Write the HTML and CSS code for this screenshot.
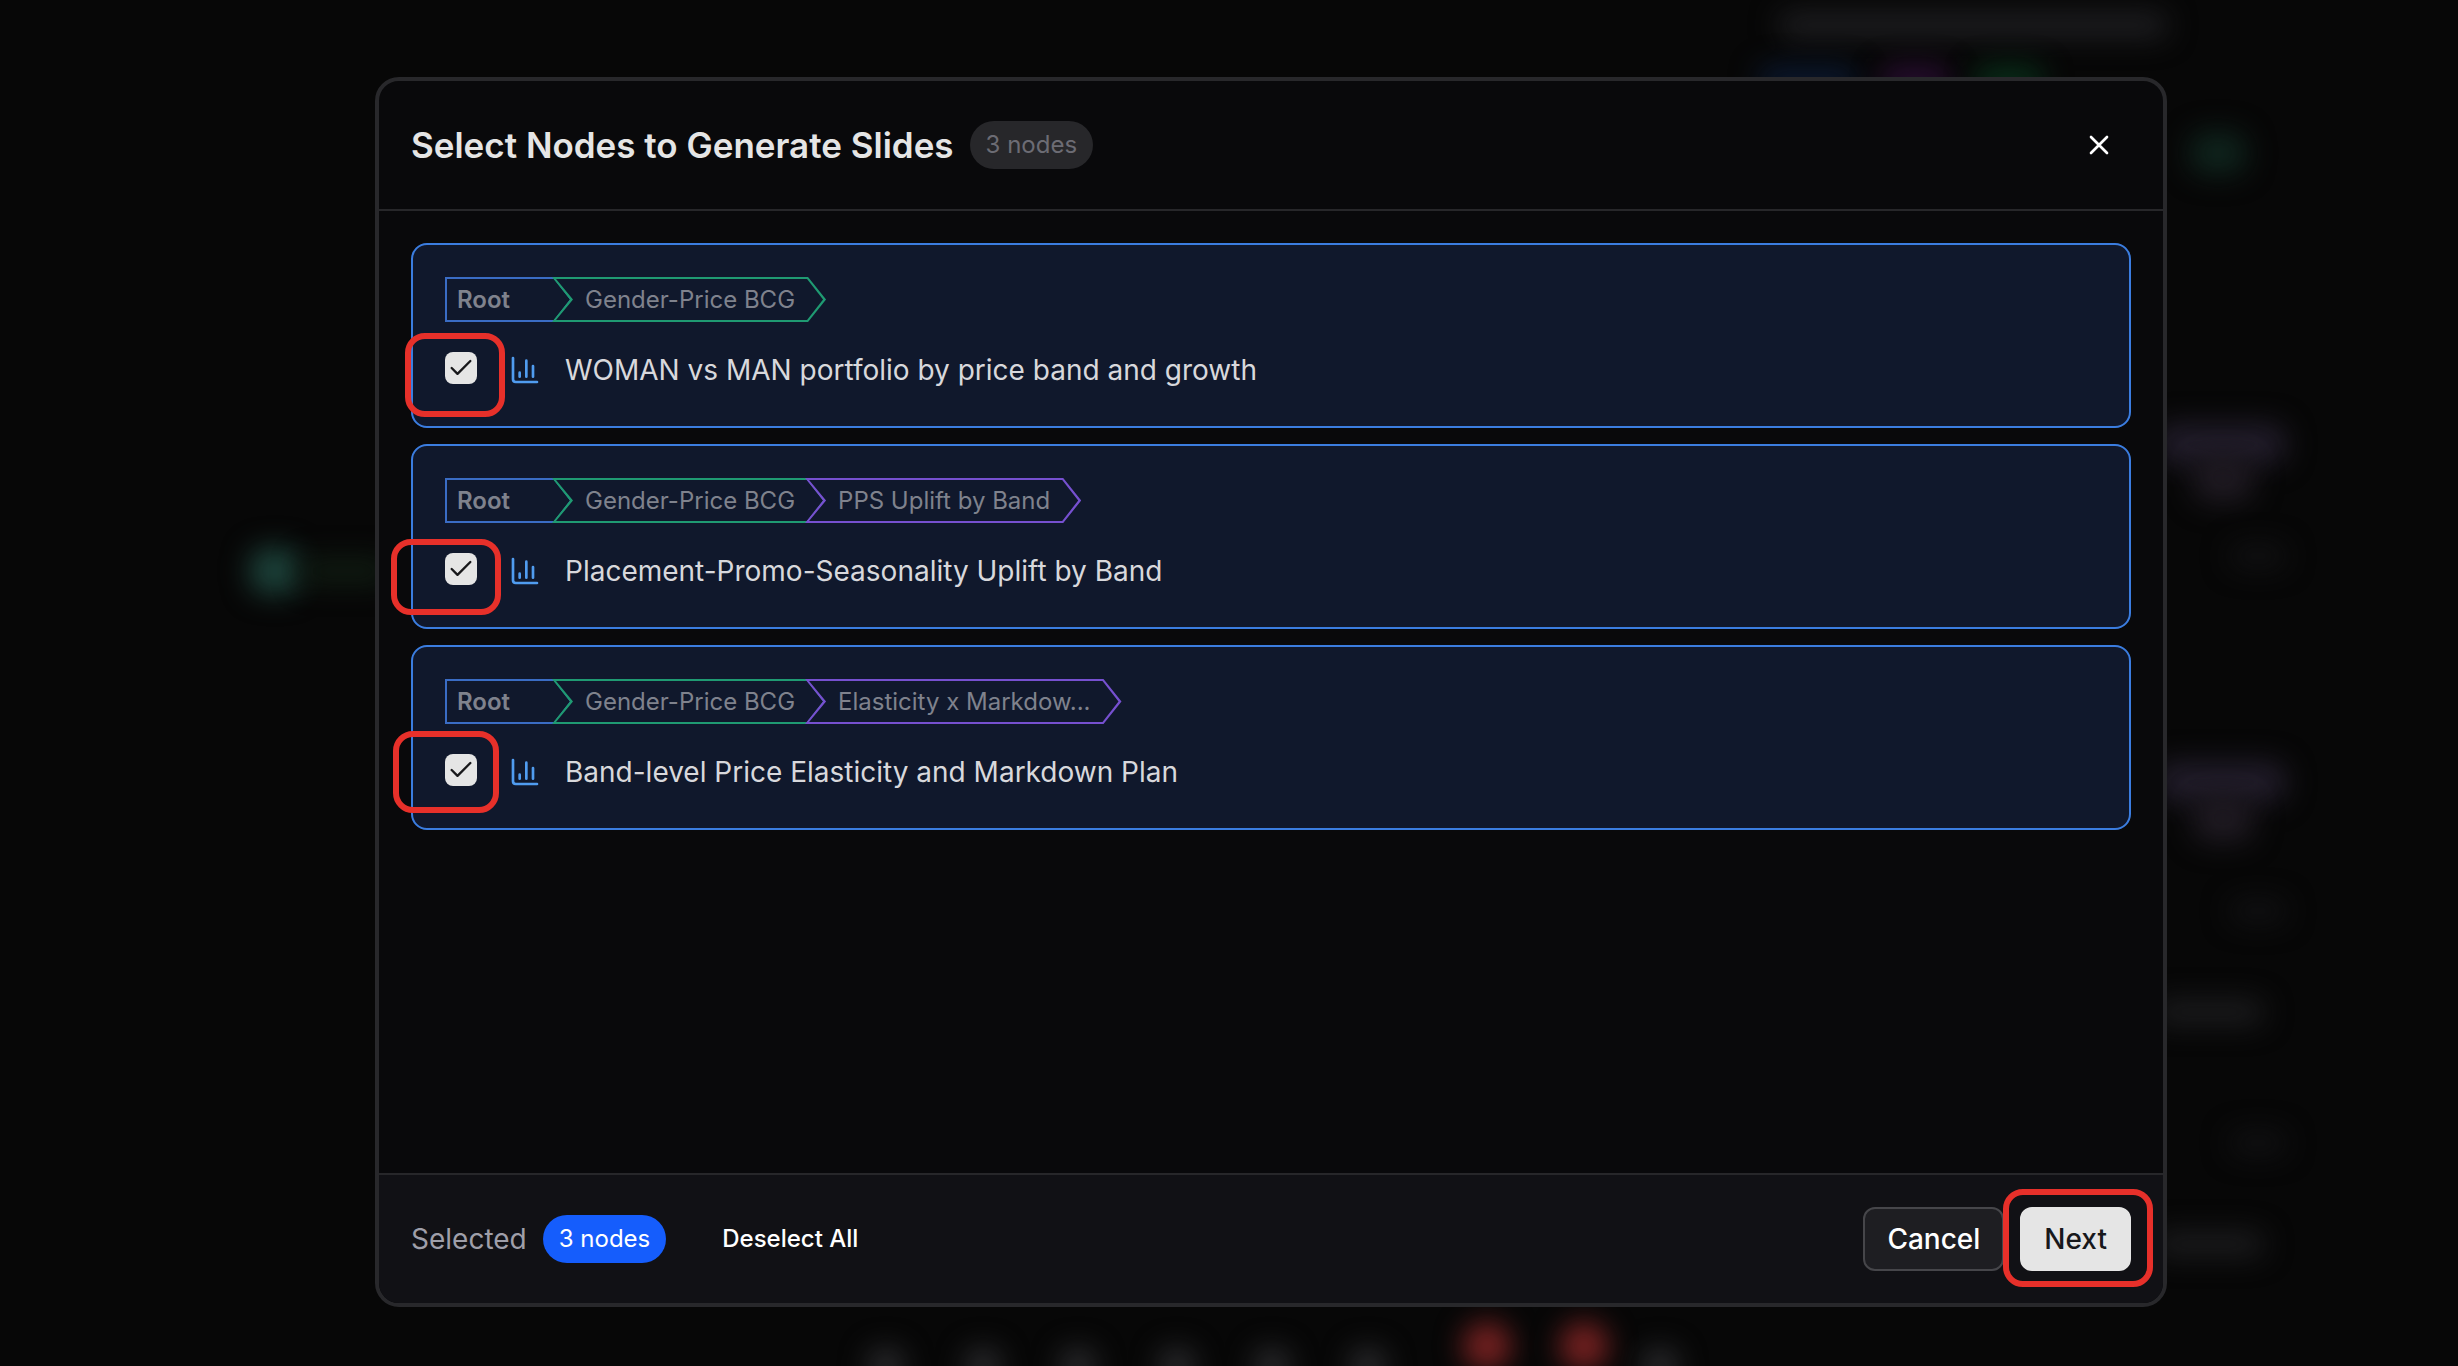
FILE: index.html
```html
<!DOCTYPE html>
<html lang="en">
<head>
    <meta charset="UTF-8">
    <meta name="viewport" content="width=device-width, initial-scale=1.0">
    <title>Select Nodes to Generate Slides</title>
    <link rel="stylesheet" href="styles.css">
</head>
<body>
    <!-- blurred canvas behind the dialog -->
    <div class="backdrop" aria-hidden="true">
        <span class="blob blob-heading"></span>
        <span class="blob blob-tag tag-blue"></span>
        <span class="blob blob-tag tag-purple"></span>
        <span class="blob blob-tag tag-green"></span>
        <span class="blob blob-status"></span>
        <span class="blob blob-node node-a"></span>
        <span class="blob blob-node-tip tip-a"></span>
        <span class="blob blob-node node-b"></span>
        <span class="blob blob-node-tip tip-b"></span>
        <span class="blob blob-line line-a"></span>
        <span class="blob blob-line line-b"></span>
        <span class="blob blob-dot dot-a"></span>
        <span class="blob blob-dot dot-b"></span>
        <span class="blob blob-dot dot-c"></span>
        <span class="blob blob-root"></span>
        <span class="blob blob-root-text"></span>
        <span class="blob blob-tool tool-1"></span>
        <span class="blob blob-tool tool-2"></span>
        <span class="blob blob-tool tool-3"></span>
        <span class="blob blob-tool tool-4"></span>
        <span class="blob blob-tool tool-5"></span>
        <span class="blob blob-tool tool-6"></span>
        <span class="blob blob-tool tool-7"></span>
        <span class="blob blob-alert alert-1"></span>
        <span class="blob blob-alert alert-2"></span>
    </div>

    <div class="overlay">
        <div class="dialog" role="dialog" aria-modal="true" aria-labelledby="dialog-title">
            <header class="dialog-header">
                <h2 class="dialog-title" id="dialog-title">Select Nodes to Generate Slides</h2>
                <span class="badge">3 nodes</span>
                <button class="btn-close" type="button" aria-label="Close">
                    <svg class="icon" viewBox="0 0 24 24"><path d="M18 6 6 18M6 6l12 12"/></svg>
                </button>
            </header>

            <ul class="node-list">
                <li class="node-card">
                    <div class="path">
                        <span class="crumb crumb-root">Root</span>
                        <span class="crumb crumb-green">Gender-Price BCG</span>
                    </div>
                    <div class="node-row">
                        <span class="check">
                            <input type="checkbox" id="node-1" checked>
                            <svg viewBox="0 0 24 24"><path d="M20 6 9 17l-5-5"/></svg>
                        </span>
                        <svg class="icon icon-chart" viewBox="0 0 24 24"><path d="M3 3v16a2 2 0 0 0 2 2h16M18 17V9M13 17V5M8 17v-3"/></svg>
                        <label class="node-title" for="node-1">WOMAN vs MAN portfolio by price band and growth</label>
                    </div>
                    <span class="mark mark-1"></span>
                </li>
                <li class="node-card">
                    <div class="path">
                        <span class="crumb crumb-root">Root</span>
                        <span class="crumb crumb-green">Gender-Price BCG</span>
                        <span class="crumb crumb-purple">PPS Uplift by Band</span>
                    </div>
                    <div class="node-row">
                        <span class="check">
                            <input type="checkbox" id="node-2" checked>
                            <svg viewBox="0 0 24 24"><path d="M20 6 9 17l-5-5"/></svg>
                        </span>
                        <svg class="icon icon-chart" viewBox="0 0 24 24"><path d="M3 3v16a2 2 0 0 0 2 2h16M18 17V9M13 17V5M8 17v-3"/></svg>
                        <label class="node-title" for="node-2">Placement-Promo-Seasonality Uplift by Band</label>
                    </div>
                    <span class="mark mark-2"></span>
                </li>
                <li class="node-card">
                    <div class="path">
                        <span class="crumb crumb-root">Root</span>
                        <span class="crumb crumb-green">Gender-Price BCG</span>
                        <span class="crumb crumb-purple">Elasticity x Markdow...</span>
                    </div>
                    <div class="node-row">
                        <span class="check">
                            <input type="checkbox" id="node-3" checked>
                            <svg viewBox="0 0 24 24"><path d="M20 6 9 17l-5-5"/></svg>
                        </span>
                        <svg class="icon icon-chart" viewBox="0 0 24 24"><path d="M3 3v16a2 2 0 0 0 2 2h16M18 17V9M13 17V5M8 17v-3"/></svg>
                        <label class="node-title" for="node-3">Band-level Price Elasticity and Markdown Plan</label>
                    </div>
                    <span class="mark mark-3"></span>
                </li>
            </ul>

            <footer class="dialog-footer">
                <span class="selected-label">Selected</span>
                <span class="badge badge-blue">3 nodes</span>
                <button class="btn-text" type="button">Deselect All</button>
                <div class="actions">
                    <button class="btn btn-cancel" type="button">Cancel</button>
                    <div class="next-wrap">
                        <button class="btn btn-next" type="button">Next</button>
                        <span class="mark mark-next"></span>
                    </div>
                </div>
            </footer>
        </div>
    </div>
</body>
</html>
```
FILE: styles.css
```css
* {
    box-sizing: border-box;
}
body {
    margin: 0;
    background: #070707;
    color: #e5e5e5;
    font-family: Inter, "Liberation Sans", sans-serif;
    font-size: 28px;
    line-height: 40px;
    overflow: hidden;
}
button {
    font: inherit;
    cursor: pointer;
}

/* backdrop */
.backdrop {
    position: fixed;
    inset: 0;
    overflow: hidden;
}
.blob {
    position: absolute;
    border-radius: 16px;
    filter: blur(14px);
}
.blob-heading {
    top: 12px;
    right: 290px;
    width: 390px;
    height: 26px;
    background: #1e1e21;
}
.blob-tag {
    top: 66px;
    width: 70px;
    height: 28px;
}
.tag-blue {
    right: 600px;
    width: 100px;
    background: #0a1830;
}
.tag-purple {
    right: 508px;
    background: #2a0d33;
}
.tag-green {
    right: 414px;
    background: #08301a;
}
.blob-status {
    top: 132px;
    right: 212px;
    width: 56px;
    height: 42px;
    background: #0f241d;
}
.blob-node {
    right: 172px;
    width: 130px;
    height: 40px;
    background: #221d2b;
}
.blob-node-tip {
    right: 205px;
    width: 60px;
    height: 46px;
    background: #1f1a22;
}
.node-a { top: 424px; }
.node-b { top: 762px; }
.tip-a { top: 456px; }
.tip-b { top: 796px; }
.blob-line {
    right: 194px;
    width: 110px;
    height: 24px;
    background: #1d1d1f;
}
.line-a { top: 1000px; }
.line-b { top: 1232px; }
.blob-dot {
    right: 172px;
    width: 56px;
    height: 22px;
    background: #121214;
}
.dot-a { top: 545px; }
.dot-b { top: 900px; }
.dot-c { top: 1132px; }
.blob-root {
    top: 548px;
    left: 250px;
    width: 50px;
    height: 46px;
    background: #1d433b;
}
.blob-root-text {
    top: 558px;
    left: 300px;
    width: 90px;
    height: 26px;
    background: #101c12;
}
.blob-tool {
    bottom: -18px;
    width: 36px;
    height: 36px;
    background: #2c2c2f;
}
.tool-1 { left: 868px; }
.tool-2 { left: 965px; }
.tool-3 { left: 1060px; }
.tool-4 { left: 1159px; }
.tool-5 { left: 1254px; }
.tool-6 { left: 1350px; }
.tool-7 { left: 1642px; }
.blob-alert {
    bottom: -4px;
    width: 48px;
    height: 48px;
    border-radius: 50%;
    background: #7a2222;
}
.alert-1 { left: 1463px; }
.alert-2 { left: 1560px; }

/* dialog */
.overlay {
    position: relative;
    display: flex;
    height: 100vh;
    padding: 77px 291px 59px 375px;
}
.dialog {
    flex: 1;
    display: flex;
    flex-direction: column;
    background: #09090b;
    border: 4px solid #28282b;
    border-radius: 24px;
}
.dialog-header {
    display: flex;
    align-items: center;
    gap: 16px;
    padding: 32px;
    border-bottom: 2px solid #27272a;
}
.dialog-title {
    margin: 0;
    font-size: 35px;
    font-weight: 600;
    line-height: 40px;
}
.badge {
    padding: 4px 16px;
    border-radius: 24px;
    background: #27272a;
    color: #6c6c74;
    font-size: 24px;
}
.badge-blue {
    background: #155dfc;
    color: #fff;
}
.btn-close {
    display: grid;
    place-items: center;
    width: 64px;
    height: 64px;
    margin-left: auto;
    padding: 0;
    border: none;
    background: none;
    color: #fff;
}
.icon {
    width: 32px;
    height: 32px;
    fill: none;
    stroke: currentColor;
    stroke-width: 2;
    stroke-linecap: round;
    stroke-linejoin: round;
}

/* node list */
.node-list {
    flex: 1;
    display: flex;
    flex-direction: column;
    gap: 16px;
    margin: 0;
    padding: 32px;
    list-style: none;
}
.node-card {
    position: relative;
    display: flex;
    flex-direction: column;
    gap: 24px;
    padding: 32px;
    border: 2px solid #3b7de0;
    border-radius: 16px;
    background: #10182c;
}
.path {
    display: flex;
}
.crumb {
    position: relative;
    z-index: 0;
    height: 45px;
    padding: 0 31px 0 33px;
    background: var(--line);
    color: #7f828d;
    font-size: 24px;
    line-height: 45px;
    white-space: nowrap;
    clip-path: polygon(0 0, calc(100% - 18px) 0, 100% 50%, calc(100% - 18px) 100%, 0 100%, 18px 50%);
}
/* each crumb covers the arrow edge of the one before it */
.crumb + .crumb {
    margin-left: -21px;
}
/* inner fill leaves a 2px outline of the crumb's own colour */
.crumb::before {
    content: "";
    position: absolute;
    inset: 0;
    z-index: -1;
    background: #10182c;
    clip-path: polygon(4px 2px, calc(100% - 19px) 2px, calc(100% - 3px) 50%, calc(100% - 19px) calc(100% - 2px), 4px calc(100% - 2px), 21px 50%);
}
.crumb-root {
    --line: #3a6cc4;
    min-width: 128px;
    padding: 0 12px;
    font-weight: 600;
    clip-path: polygon(0 0, calc(100% - 18px) 0, 100% 50%, calc(100% - 18px) 100%, 0 100%);
}
.crumb-root::before {
    clip-path: polygon(2px 2px, calc(100% - 19px) 2px, calc(100% - 3px) 50%, calc(100% - 19px) calc(100% - 2px), 2px calc(100% - 2px));
}
.crumb-green {
    --line: #1f9a72;
}
.crumb-purple {
    --line: #7650d0;
}
.node-row {
    display: flex;
    align-items: center;
    height: 48px;
}
.check {
    display: grid;
    padding-bottom: 4px;
    margin-right: 32px;
}
.check input,
.check svg {
    grid-area: 1 / 1;
    place-self: center;
}
.check input {
    appearance: none;
    width: 32px;
    height: 32px;
    margin: 0;
    border-radius: 8px;
    background: #e5e5e5;
}
.check svg {
    width: 28px;
    height: 28px;
    fill: none;
    stroke: #18181b;
    stroke-width: 2;
    stroke-linecap: round;
    stroke-linejoin: round;
    pointer-events: none;
}
.icon-chart {
    margin-right: 24px;
    color: #509cf0;
}
.node-title {
    color: #d8d8dc;
}

/* footer */
.dialog-footer {
    display: flex;
    align-items: center;
    gap: 16px;
    padding: 32px;
    border-top: 2px solid #27272a;
    border-radius: 0 0 20px 20px;
    background: #111115;
}
.selected-label {
    color: #9f9fa9;
}
.btn-text {
    margin-left: 16px;
    padding: 0 24px;
    border: none;
    background: none;
    color: #fff;
    font-size: 24px;
    font-weight: 500;
}
.actions {
    display: flex;
    gap: 16px;
    margin-left: auto;
}
.btn {
    height: 64px;
    padding: 0 22px;
    border: 2px solid #46464a;
    border-radius: 12px;
    font-weight: 500;
}
.btn-cancel {
    background: #1e1e22;
    color: #fff;
}
.btn-next {
    border-color: #e5e5e5;
    background: #e5e5e5;
    color: #18181b;
}
.next-wrap {
    position: relative;
}

/* red callouts drawn over the controls */
.mark {
    position: absolute;
    z-index: 1;
    border: 6px solid #e7302a;
    border-radius: 20px;
    pointer-events: none;
}
.mark-1 {
    top: 88px;
    left: -8px;
    width: 100px;
    height: 84px;
}
.mark-2 {
    top: 93px;
    left: -22px;
    width: 110px;
    height: 76px;
}
.mark-3 {
    top: 84px;
    left: -20px;
    width: 106px;
    height: 82px;
}
.mark-next {
    inset: -18px -22px -16px -17px;
}
```
